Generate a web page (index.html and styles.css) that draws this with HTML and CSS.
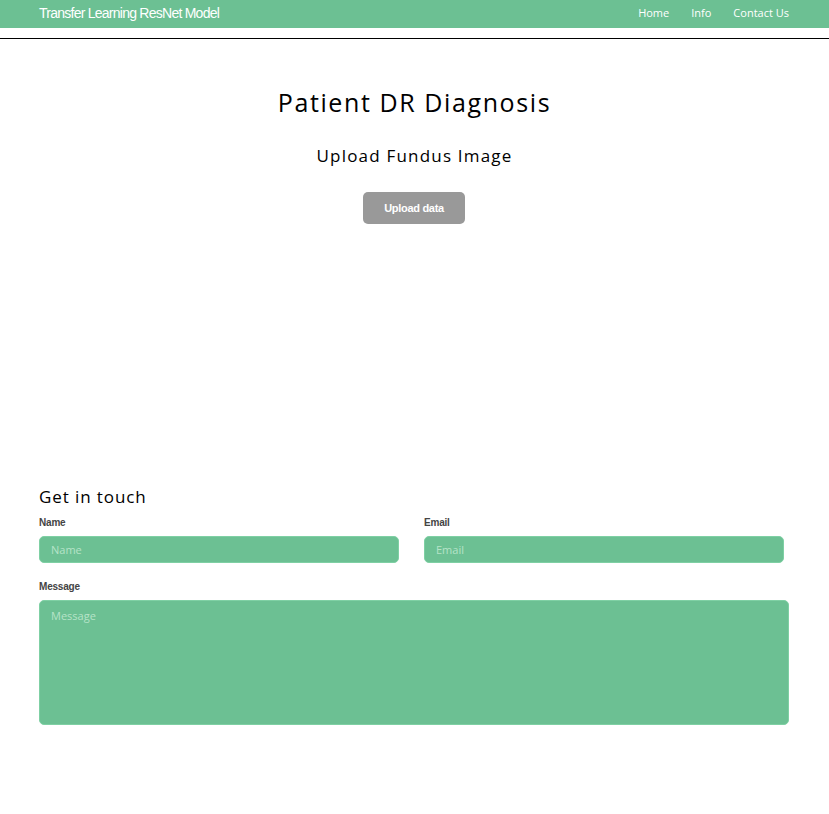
FILE: index.html
```html
<!DOCTYPE html>
<html>
<head>
<meta charset="utf-8">
<title>Patient DR Diagnosis</title>
<link rel="stylesheet" href="styles.css">
</head>
<body>
<nav class="navbar">
  <a class="brand" href="#">Transfer Learning ResNet Model</a>
  <ul class="nav-links">
    <li><a href="#">Home</a></li>
    <li><a href="#">Info</a></li>
    <li><a href="#">Contact Us</a></li>
  </ul>
</nav>
<div class="rule"></div>
<main class="upload">
  <h1 class="title">Patient DR Diagnosis</h1>
  <h2 class="subtitle">Upload Fundus Image</h2>
  <button class="btn-upload" type="button">Upload data</button>
</main>
<section class="contact">
  <h3 class="contact-title">Get in touch</h3>
  <form class="contact-form">
    <div class="row">
      <div class="field">
        <label class="lbl">Name</label>
        <input class="input" type="text" placeholder="Name">
      </div>
      <div class="field">
        <label class="lbl">Email</label>
        <input class="input" type="text" placeholder="Email">
      </div>
    </div>
    <div class="field full">
      <label class="lbl">Message</label>
      <textarea class="input textarea" placeholder="Message"></textarea>
    </div>
  </form>
</section>
</body>
</html>
```
FILE: styles.css
```css
* { box-sizing: border-box; }
body {
  margin: 0;
  background: #fff;
  font-family: "Open Sans", "Liberation Sans", sans-serif;
  color: #000;
}
.navbar {
  height: 28px;
  background: #6cc093;
  display: flex;
  align-items: center;
  justify-content: space-between;
  padding: 0 40px 2px 39px;
}
.brand {
  color: #fff;
  text-decoration: none;
  font-family: "Liberation Sans", Arial, sans-serif;
  font-size: 14px;
  line-height: 16px;
  letter-spacing: -0.75px;
}
.nav-links {
  list-style: none;
  display: flex;
  gap: 22px;
  margin: 0;
  padding: 0;
}
.nav-links a {
  display: block;
  color: #fff;
  text-decoration: none;
  font-family: "Open Sans", sans-serif;
  font-size: 11px;
  line-height: 14px;
}
.rule {
  margin-top: 10px;
  border-top: 1px solid #000;
}
.upload {
  display: flex;
  flex-direction: column;
  align-items: center;
  height: 447px;
}
.title {
  margin: 48px 0 0;
  font-weight: 400;
  font-size: 25px;
  line-height: 30px;
  letter-spacing: 1.6px;
}
.subtitle {
  margin: 28px 0 0;
  font-weight: 400;
  font-size: 17px;
  line-height: 22px;
  letter-spacing: 1.2px;
}
.btn-upload {
  margin: 25px 1px 0 0;
  width: 102px;
  height: 32px;
  border: none;
  border-radius: 5px;
  background: #999;
  color: #fff;
  font-family: "Liberation Sans", Arial, sans-serif;
  font-weight: 700;
  font-size: 11px;
  letter-spacing: -0.3px;
}
.contact {
  padding: 0 40px 0 39px;
}
.contact-title {
  margin: 0;
  font-weight: 400;
  font-size: 17px;
  line-height: 22px;
  letter-spacing: 0.9px;
}
.contact-form {
  display: flex;
  flex-direction: column;
  gap: 18px;
  margin-top: 9px;
}
.row {
  display: grid;
  grid-template-columns: 360px 360px;
  column-gap: 25px;
}
.field {
  display: flex;
  flex-direction: column;
  gap: 7px;
}
.lbl {
  font-family: "Liberation Sans", Arial, sans-serif;
  font-weight: 700;
  font-size: 10px;
  line-height: 12px;
  color: #444;
  letter-spacing: -0.2px;
}
.input {
  height: 27px;
  border: 1px solid #7fd0a4;
  border-radius: 5px;
  background: #6cc093;
  padding: 0 11px;
  font-family: "Open Sans", sans-serif;
  font-size: 11px;
  color: #fff;
  outline: none;
}
.input::placeholder { color: #b6e3c8; }
.textarea {
  height: 125px;
  padding-top: 7px;
  resize: none;
}
```
